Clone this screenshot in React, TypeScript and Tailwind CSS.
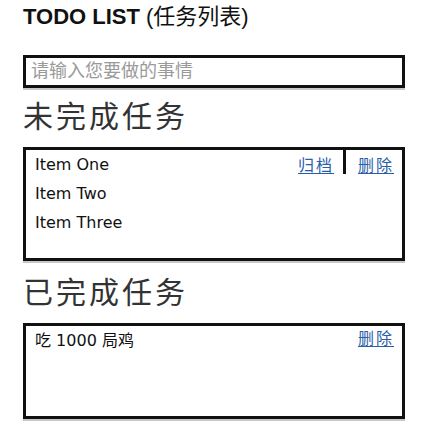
import { useState } from "react";

type Todo = { id: number; text: string };

const FONT = "font-['Liberation_Sans','Noto_Sans_CJK_SC',sans-serif]";

function TaskLink({ children }: { children: React.ReactNode }) {
  return (
    <a href="#" className="text-[16px] leading-[20px] tracking-[2px] text-[#2a5da8] underline underline-offset-2">
      {children}
    </a>
  );
}

export default function App() {
  const [todos] = useState<Todo[]>([
    { id: 1, text: "Item One" },
    { id: 2, text: "Item Two" },
    { id: 3, text: "Item Three" },
  ]);
  const [done] = useState<Todo[]>([{ id: 4, text: "吃 1000 局鸡" }]);

  return (
    <div className={`min-h-[444px] w-[432px] bg-white pl-[23px] pr-[27px] pt-[4px] ${FONT}`}>
      <h1 className="text-[22px] font-bold leading-[26px] text-[#111]">
        TODO LIST <span className="font-normal">(任务列表)</span>
      </h1>

      <div className="mt-[25px] h-[33px] border-[3px] border-[#111] shadow-[0_2px_0_#c8c8c8]">
        <input
          className="h-full w-full px-[5px] text-[18px] text-[#333] outline-none placeholder:text-[#9a9a9a]"
          placeholder="请输入您要做的事情"
        />
      </div>

      <h2 className="mt-[9px] text-[30px] leading-[40px] tracking-[3px] text-[#333]">未完成任务</h2>
      <ul className="mt-[10px] h-[114px] border-[3px] border-[#111] pl-[9px] pr-[8px] shadow-[0_2px_0_#c8c8c8]">
        {todos.map((t, i) => (
          <li key={t.id} className="flex h-[29px] items-center justify-between">
            <span className="font-['DejaVu_Sans','Noto_Sans_CJK_SC',sans-serif] text-[16px] text-[#111]">{t.text}</span>
            {i === 0 && (
              <div className="flex h-full items-start">
                <span className="mt-[4px]">
                  <TaskLink>归档</TaskLink>
                </span>
                <div className="ml-[9px] mr-[12px] h-[24px] w-[3px] bg-[#111]" />
                <span className="mt-[4px]">
                  <TaskLink>删除</TaskLink>
                </span>
              </div>
            )}
          </li>
        ))}
      </ul>

      <h2 className="mt-[12px] text-[30px] leading-[40px] tracking-[3px] text-[#333]">已完成任务</h2>
      <ul className="mt-[10px] h-[96px] border-[3px] border-[#111] pl-[9px] pr-[8px] shadow-[0_2px_0_#c8c8c8]">
        {done.map((t) => (
          <li key={t.id} className="flex h-[29px] items-center justify-between">
            <span className="font-['DejaVu_Sans','Noto_Sans_CJK_SC',sans-serif] text-[16px] text-[#111]">{t.text}</span>
            <span className="-mt-[3px]">
              <TaskLink>删除</TaskLink>
            </span>
          </li>
        ))}
      </ul>
    </div>
  );
}
